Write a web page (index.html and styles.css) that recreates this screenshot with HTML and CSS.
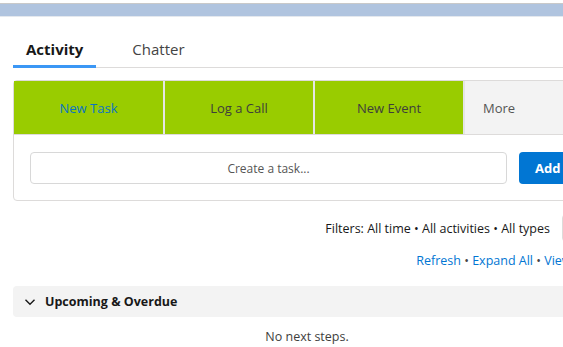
FILE: index.html
```html
<!DOCTYPE html>
<html>

<head>
    <title>Activity</title>
    <meta charset="utf-8">
    <meta name="viewport" content="width=device-width, initial-scale=1.0">
    <link rel="stylesheet" href="styles.css">
</head>

<body>

    <div class="topbar"></div>

    <main class="panel">
        <nav class="tabs">
            <a class="tab valgt">Activity</a>
            <a class="tab">Chatter</a>
        </nav>

        <section class="composer">
            <div class="actions">
                <button class="action blue">New Task</button>
                <button class="action">Log a Call</button>
                <button class="action">New Event</button>
                <button class="action more">More</button>
            </div>
            <div class="task_row">
                <input class="task_input" type="text" placeholder="Create a task...">
                <button class="add">Add</button>
            </div>
        </section>

        <div class="filters">
            <span>Filters: All time &bull; All activities &bull; All types</span>
            <button class="gear"></button>
        </div>

        <div class="links">
            <a>Refresh</a> &bull; <a>Expand All</a> &bull; <a>View All</a>
        </div>

        <section class="upcoming">
            <h2 class="upcoming_head">
                <svg width="12" height="12" viewBox="0 0 12 12">
                    <path d="M1.5 3.8 L6 8.3 L10.5 3.8" fill="none" stroke="#181818" stroke-width="1.4"/>
                </svg>
                Upcoming &amp; Overdue
            </h2>
            <p class="empty">No next steps.</p>
        </section>
    </main>

</body>

</html>
```

FILE: styles.css
```css
html,
body {
    margin: 0;
    padding: 0;
    background-color: #ffffff;
    overflow: hidden;
}

body {
    font-family: 'Open Sans', 'Noto Sans', sans-serif;
    font-size: 12.5px;
    color: #181818;
}

.topbar {
    margin-top: 3px;
    height: 12px;
    background-color: #b0c4df;
    border-top: 1px solid #c9c9c9;
    border-bottom: 1px solid #e4e8ee;
}

.panel {
    width: 588px;
    padding-left: 13px;
}

.tabs {
    display: flex;
    gap: 23px;
    margin-top: 21px;
    border-bottom: 1px solid #dddbda;
}

.tab {
    padding: 0 13px 5px 13px;
    font-size: 15px;
    line-height: 22px;
    color: #444444;
    border-bottom: 3px solid transparent;
    margin-bottom: -1px;
}

.tab.valgt {
    font-weight: 700;
    color: #181818;
    border-bottom-color: #3b97f5;
}

.composer {
    margin-top: 12px;
    border: 1px solid #dddbda;
    border-radius: 4px;
}

.actions {
    display: grid;
    grid-template-columns: 149px 148px 148px 1fr;
    gap: 2px;
    background-color: #e5e5e5;
    border-bottom: 1px solid #dddbda;
}

.action {
    height: 53px;
    border: none;
    background-color: #99cc00;
    font-family: inherit;
    font-size: 13px;
    color: #3e3e3c;
}

.action.blue {
    color: #0b74c4;
}

.action.more {
    background-color: #f3f3f3;
    text-align: left;
    padding-left: 18px;
    color: #555555;
}

.task_row {
    display: flex;
    gap: 12px;
    padding: 17px 16px 16px 16px;
}

.task_input {
    flex: 1;
    height: 32px;
    box-sizing: border-box;
    border: 1px solid #d8d8d8;
    border-radius: 4px;
    text-align: center;
    font-family: inherit;
    font-size: 12px;
}

.task_input::placeholder {
    color: #555555;
}

.add {
    width: 65px;
    height: 32px;
    border: none;
    border-radius: 4px;
    background-color: #0176d3;
    color: #ffffff;
    font-family: inherit;
    font-size: 13px;
    font-weight: 700;
    text-align: left;
    padding-left: 16px;
}

.filters {
    display: flex;
    justify-content: flex-end;
    align-items: center;
    gap: 12px;
    margin-top: 13px;
    padding-right: 7px;
}

.gear {
    width: 32px;
    height: 28px;
    border: 1px solid #dddbda;
    border-radius: 4px;
    background-color: #ffffff;
}

.links {
    text-align: right;
    margin-top: 10px;
    padding-right: 12px;
    line-height: 18px;
    color: #444444;
}

.links a {
    color: #0176d3;
}

.upcoming {
    margin-top: 16px;
}

.upcoming_head {
    display: flex;
    align-items: center;
    gap: 9px;
    margin: 0;
    height: 31px;
    padding-left: 11px;
    border-radius: 4px;
    background-color: #f3f3f3;
    font-size: 12.5px;
    font-weight: 700;
}

.empty {
    margin: 11px 0 0 0;
    text-align: center;
    color: #3e3e3c;
}
```
